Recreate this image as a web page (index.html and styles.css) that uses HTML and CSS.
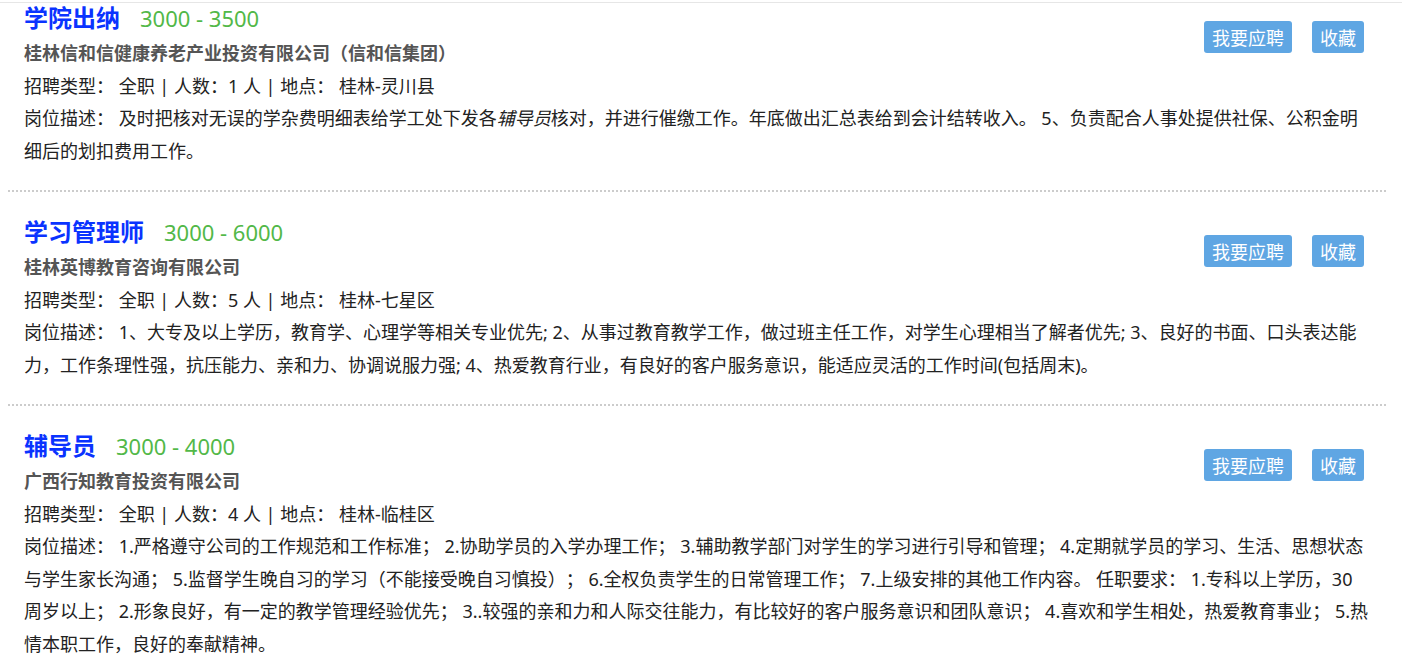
FILE: index.html
```html
<!DOCTYPE html>
<html lang="zh-CN">
<head>
  <meta charset="UTF-8">
  <meta name="viewport" content="width=device-width, initial-scale=1.0">
  <title>招聘信息</title>
  <link rel="stylesheet" href="styles.css">
</head>
<body>
  <div class="topline"></div>
  <ul class="job-list">
    <li class="job">
      <div class="job-actions">
        <button class="btn">我要应聘</button>
        <button class="btn">收藏</button>
      </div>
      <h3 class="job-title"><a href="#">学院出纳</a><span class="salary">3000 - 3500</span></h3>
      <p class="company">桂林信和信健康养老产业投资有限公司（信和信集团）</p>
      <p class="meta">招聘类型： 全职 | 人数：1 人 | 地点： 桂林-灵川县</p>
      <p class="desc">岗位描述： 及时把核对无误的学杂费明细表给学工处下发各<em>辅导员</em>核对，并进行催缴工作。年底做出汇总表给到会计结转收入。 5、负责配合人事处提供社保、公积金明细后的划扣费用工作。</p>
    </li>
    <li class="job">
      <div class="job-actions">
        <button class="btn">我要应聘</button>
        <button class="btn">收藏</button>
      </div>
      <h3 class="job-title"><a href="#">学习管理师</a><span class="salary">3000 - 6000</span></h3>
      <p class="company">桂林英博教育咨询有限公司</p>
      <p class="meta">招聘类型： 全职 | 人数：5 人 | 地点： 桂林-七星区</p>
      <p class="desc">岗位描述： 1、大专及以上学历，教育学、心理学等相关专业优先; 2、从事过教育教学工作，做过班主任工作，对学生心理相当了解者优先; 3、良好的书面、口头表达能力，工作条理性强，抗压能力、亲和力、协调说服力强; 4、热爱教育行业，有良好的客户服务意识，能适应灵活的工作时间(包括周末)。</p>
    </li>
    <li class="job">
      <div class="job-actions">
        <button class="btn">我要应聘</button>
        <button class="btn">收藏</button>
      </div>
      <h3 class="job-title"><a href="#">辅导员</a><span class="salary">3000 - 4000</span></h3>
      <p class="company">广西行知教育投资有限公司</p>
      <p class="meta">招聘类型： 全职 | 人数：4 人 | 地点： 桂林-临桂区</p>
      <p class="desc">岗位描述： 1.严格遵守公司的工作规范和工作标准； 2.协助学员的入学办理工作； 3.辅助教学部门对学生的学习进行引导和管理； 4.定期就学员的学习、生活、思想状态与学生家长沟通； 5.监督学生晚自习的学习（不能接受晚自习慎投）； 6.全权负责学生的日常管理工作； 7.上级安排的其他工作内容。 任职要求： 1.专科以上学历，30周岁以上； 2.形象良好，有一定的教学管理经验优先； 3..较强的亲和力和人际交往能力，有比较好的客户服务意识和团队意识； 4.喜欢和学生相处，热爱教育事业； 5.热情本职工作，良好的奉献精神。</p>
    </li>
  </ul>
</body>
</html>
```

FILE: styles.css
```css
body {
  margin: 0;
  font-family: "Noto Sans", "Noto Sans CJK SC", sans-serif;
  color: #222;
  background: #fff;
  text-spacing-trim: space-all;
}
.topline {
  height: 1px;
  margin-top: 2px;
  background: #e6e6e6;
}
.job-list {
  list-style: none;
  margin: 0 16px 0 8px;
  padding: 0;
}
.job {
  padding: 21px 16px 23px;
  border-bottom: 2px dotted #ccc;
}
.job:first-child {
  padding-top: 0;
  margin-top: -4px;
}
.job-actions {
  float: right;
  display: flex;
  gap: 20px;
  margin-top: 22px;
  margin-right: 6px;
}
.btn {
  height: 32px;
  padding: 0 8px;
  border: none;
  border-radius: 3px;
  background: #5fa6e3;
  color: #fff;
  font-family: inherit;
  font-size: 18px;
  cursor: pointer;
}
.job-title {
  margin: 0;
  font-size: 24px;
  line-height: 38px;
}
.job-title a {
  color: #0a33ff;
  text-decoration: none;
}
.salary {
  margin-left: 20px;
  font-size: 22px;
  font-weight: normal;
  color: #52b848;
}
.company,
.meta,
.desc {
  margin: 0;
  font-size: 18px;
  line-height: 32.5px;
}
.company {
  font-weight: bold;
  color: #555;
}
```
